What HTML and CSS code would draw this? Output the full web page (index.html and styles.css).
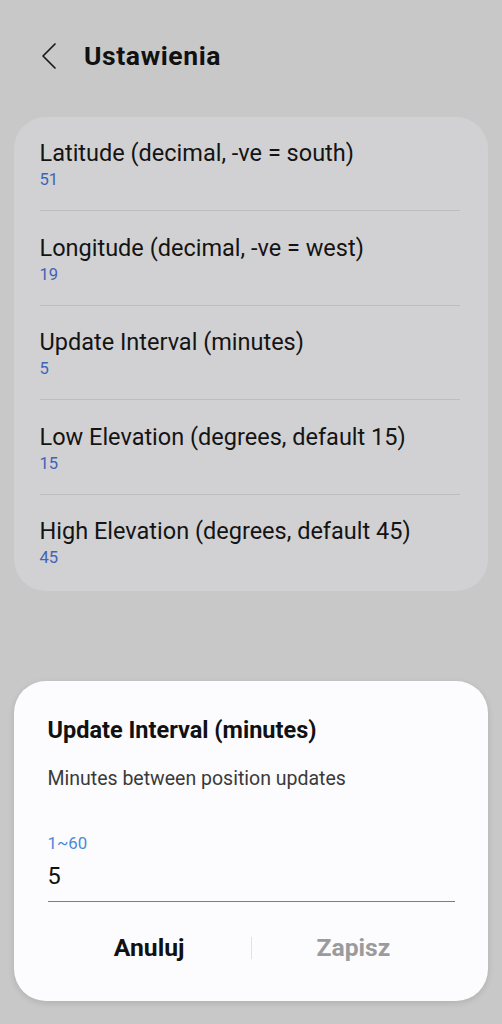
FILE: index.html
```html
<!DOCTYPE html>
<html lang="pl">
<head>
<meta charset="utf-8">
<title>Ustawienia</title>
<link rel="stylesheet" href="styles.css">
</head>
<body>
<div class="screen">
  <header class="appbar">
    <span class="back" aria-label="Wstecz">
      <svg width="24" height="28" viewBox="0 0 24 28" fill="none">
        <path d="M15 2 L3 14 L15 26" stroke="#1a1a1a" stroke-width="1.7" stroke-linecap="round" stroke-linejoin="round"/>
      </svg>
    </span>
    <h1 class="title">Ustawienia</h1>
  </header>

  <section class="card">
    <div class="item">
      <div class="item-title">Latitude (decimal, -ve = south)</div>
      <div class="item-value">51</div>
    </div>
    <div class="item">
      <div class="item-title">Longitude (decimal, -ve = west)</div>
      <div class="item-value">19</div>
    </div>
    <div class="item">
      <div class="item-title">Update Interval (minutes)</div>
      <div class="item-value">5</div>
    </div>
    <div class="item">
      <div class="item-title">Low Elevation (degrees, default 15)</div>
      <div class="item-value">15</div>
    </div>
    <div class="item">
      <div class="item-title">High Elevation (degrees, default 45)</div>
      <div class="item-value">45</div>
    </div>
  </section>

  <section class="dialog">
    <div class="dialog-title">Update Interval (minutes)</div>
    <div class="dialog-text">Minutes between position updates</div>
    <div class="field-hint">1~60</div>
    <div class="field-input">5</div>
    <div class="actions">
      <span class="btn btn-cancel">Anuluj</span>
      <span class="sep"></span>
      <span class="btn btn-save">Zapisz</span>
    </div>
  </section>
</div>
</body>
</html>
```
FILE: styles.css
```css
html, body {
  margin: 0;
  padding: 0;
}
body {
  background: #c8c8c8;
  font-family: Roboto, "Noto Sans", sans-serif;
  color: #111;
}
.screen {
  width: 502px;
  height: 1024px;
  display: flex;
  flex-direction: column;
  overflow: hidden;
}
.appbar {
  display: flex;
  align-items: center;
  padding: 40.5px 0 0 31px;
  height: 30px;
}
.back {
  display: flex;
  width: 24px;
  height: 28px;
  margin-left: 9px;
  margin-top: 1px;
}
.title {
  margin: 0 0 0 20px;
  font-size: 26.5px;
  line-height: 30px;
  letter-spacing: 0.6px;
  font-weight: 700;
  color: #111;
}
.card {
  margin: 46.5px 14px 0 14px;
  background: #d1d1d3;
  border-radius: 32px;
  padding: 0 28px 2.5px 25.5px;
  display: flex;
  flex-direction: column;
}
.item {
  padding: 22.1px 0 20px 0;
  border-bottom: 1px solid #bdbdbf;
  display: flex;
  flex-direction: column;
  gap: 3.4px;
}
.item:last-child {
  border-bottom: none;
}
.item-title {
  font-size: 23.5px;
  line-height: 28px;
  color: #141414;
}
.item-value {
  font-size: 16.6px;
  line-height: 20px;
  color: #4064b4;
}
.dialog {
  margin: 90px 14px 0 14px;
  height: 320px;
  box-sizing: border-box;
  background: #fcfcfe;
  border-radius: 32px;
  box-shadow: 0 2px 6px rgba(0,0,0,0.12);
  padding: 35.5px 33px 0 33.5px;
  display: flex;
  flex-direction: column;
}
.dialog-title {
  font-size: 23.5px;
  line-height: 28px;
  font-weight: 700;
  color: #111;
}
.dialog-text {
  margin-top: 22.5px;
  font-size: 19.5px;
  line-height: 24px;
  color: #3a3a3a;
}
.field-hint {
  margin-top: 42px;
  font-size: 16.8px;
  line-height: 20px;
  color: #4a88dc;
}
.field-input {
  margin-top: 9.5px;
  font-size: 23.5px;
  line-height: 28px;
  color: #111;
  padding-bottom: 10.5px;
  border-bottom: 1.5px solid #7d7d7d;
}
.actions {
  margin-top: 31px;
  display: flex;
  align-items: center;
  height: 30px;
}
.btn {
  flex: 1;
  text-align: center;
  font-size: 24.7px;
  line-height: 30px;
  font-weight: 700;
}
.btn-cancel {
  color: #111;
}
.btn-save {
  color: #9b9b9d;
}
.sep {
  width: 1px;
  height: 22px;
  background: #e2e2e4;
}
```
